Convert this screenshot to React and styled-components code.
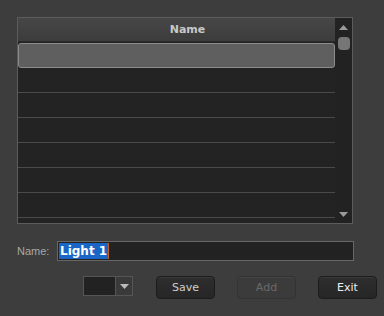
import React from 'react';
import styled, { createGlobalStyle } from 'styled-components';

const Global = createGlobalStyle`
    html, body {
        margin: 0;
        padding: 0;
        background: #3d3d3d;
    }
    body {
        font-family: Tahoma, "DejaVu Sans", "Liberation Sans", sans-serif;
    }
`;

function Arrow({up, color = '#9a9a9a'}) {
    return (
        <svg width="9" height="5" viewBox="0 0 9 5">
            {up
                ? <polygon points="4.5,0 9,5 0,5" fill={color} />
                : <polygon points="0,0 9,0 4.5,5" fill={color} />}
        </svg>
    );
}

function App() {
    const rows = [1, 2, 3, 4, 5, 6, 7];
    return (
        <Page>
            <Global />
            <Frame>
                <List>
                    <Header>Name</Header>
                    <Row selected />
                    {rows.map(i => <Row key={i} />)}
                </List>
                <ScrollBar>
                    <Arrow up />
                    <Thumb />
                    <Spacer />
                    <Arrow />
                </ScrollBar>
            </Frame>
            <NameRow>
                <Label>Name:</Label>
                <Field>
                    <Selected>Light 1</Selected>
                    <Caret />
                </Field>
            </NameRow>
            <Buttons>
                <Combo>
                    <ComboBox />
                    <ComboArrow><Arrow color="#bbb" /></ComboArrow>
                </Combo>
                <Button>Save</Button>
                <Button disabled>Add</Button>
                <Button bright>Exit</Button>
            </Buttons>
        </Page>
    );
}

const Page = styled.div`
    width: 384px;
    height: 316px;
    box-sizing: border-box;
    padding: 17px 31px 0 17px;
`;

const Frame = styled.div`
    height: 207px;
    box-sizing: border-box;
    border: 1px solid #5c5c5c;
    background: #232323;
    display: grid;
    grid-template-columns: 1fr 17px;
    overflow: hidden;
`;

const List = styled.div`
    display: flex;
    flex-direction: column;
    overflow: hidden;
`;

const Header = styled.div`
    height: 24px;
    flex: none;
    background: linear-gradient(#474747, #3c3c3c);
    border-bottom: 1px solid #2a2a2a;
    box-sizing: border-box;
    color: #c8c8c8;
    font-weight: bold;
    font-size: 11px;
    display: flex;
    align-items: center;
    justify-content: center;
    padding-left: 22px;
`;

const Row = styled.div`
    height: 25px;
    flex: none;
    box-sizing: border-box;
    border-bottom: 1px solid #4a4a4a;
    ${p => p.selected && `
        margin-top: 1px;
        background: #5f5f5f;
        border: 1px solid #8c8c8c;
        border-radius: 3px;
    `}
`;

const ScrollBar = styled.div`
    display: flex;
    flex-direction: column;
    align-items: center;
    padding: 7px 0 6px;
    box-sizing: border-box;
    background: #222;
`;

const Thumb = styled.div`
    width: 12px;
    height: 13px;
    margin-top: 7px;
    border-radius: 4px;
    background: #767676;
`;

const Spacer = styled.div`
    flex: 1;
`;

const NameRow = styled.div`
    display: flex;
    align-items: center;
    margin-top: 17px;
    margin-right: -1px;
`;

const Label = styled.div`
    width: 40px;
    flex: none;
    font-family: "Liberation Sans", Arial, sans-serif;
    font-size: 11px;
    color: #a8a8a8;
`;

const Field = styled.div`
    flex: 1;
    height: 20px;
    box-sizing: border-box;
    border: 1px solid #676767;
    background: #222;
    display: flex;
    align-items: center;
    padding-left: 1px;
`;

const Selected = styled.span`
    background: #1a66c6;
    color: #fff;
    font-weight: bold;
    font-size: 12px;
    line-height: 16px;
    padding: 0 1px;
`;

const Caret = styled.span`
    width: 1px;
    height: 16px;
    background: #c06020;
`;

const Buttons = styled.div`
    display: flex;
    align-items: flex-start;
    margin-top: 15px;
    padding-left: 66px;
`;

const Combo = styled.div`
    width: 50px;
    height: 20px;
    flex: none;
    box-sizing: border-box;
    border: 1px solid #555;
    display: flex;
    margin-right: 23px;
`;

const ComboBox = styled.div`
    flex: 1;
    background: #222;
    border-right: 1px solid #555;
`;

const ComboArrow = styled.div`
    width: 16px;
    background: #3a3a3a;
    display: flex;
    align-items: center;
    justify-content: center;
`;

const Button = styled.button`
    width: 59px;
    height: 23px;
    flex: none;
    margin-right: 22px;
    border-radius: 4px;
    border: 1px solid ${p => p.disabled ? '#333' : '#1c1c1c'};
    background: ${p => p.disabled ? '#3b3b3b' : 'linear-gradient(#2e2e2e, #262626)'};
    box-shadow: inset 0 1px 0 ${p => p.disabled ? '#444' : '#3a3a3a'};
    color: ${p => p.disabled ? '#6a6a6a' : p.bright ? '#eee' : '#cfcfcf'};
    font-family: Tahoma, "DejaVu Sans", "Liberation Sans", sans-serif;
    font-size: 11px;
    padding: 0;
`;

export default App;
